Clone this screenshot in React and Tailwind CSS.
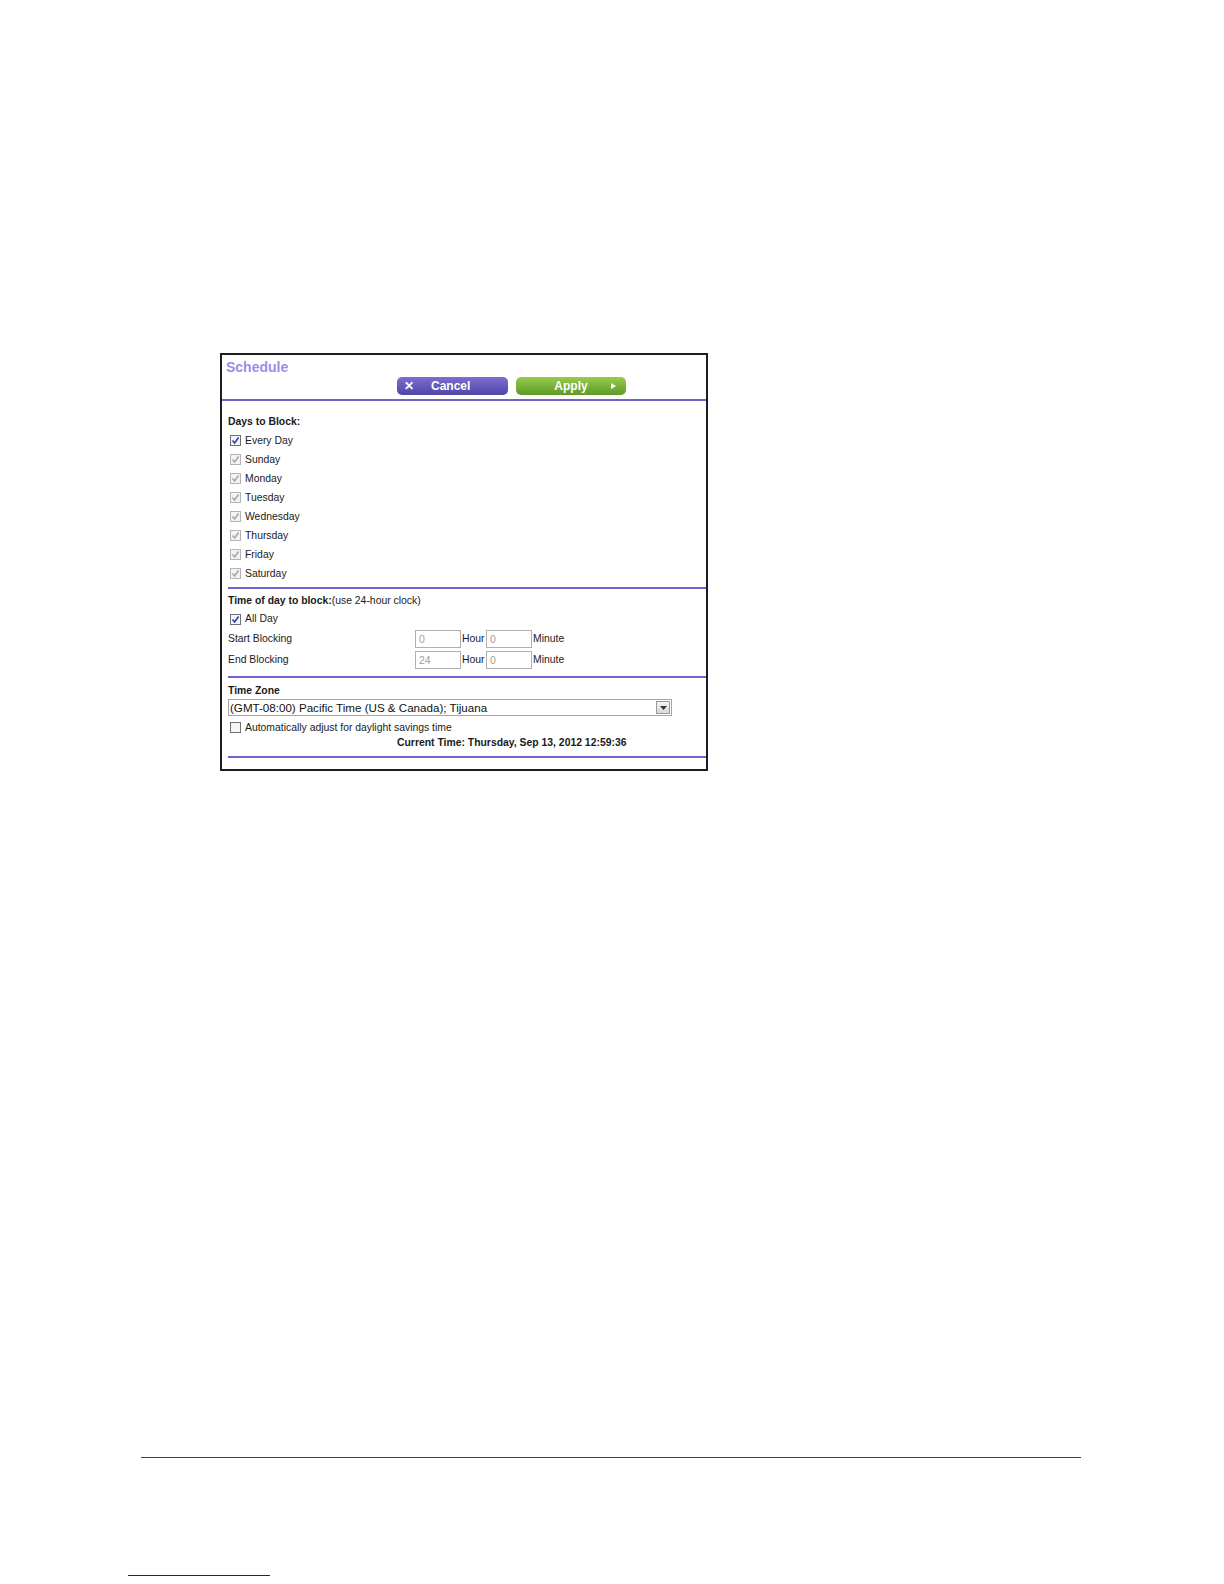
const FONT = { fontFamily: '"Liberation Sans", Arial, sans-serif' }

const DAYS = ['Sunday', 'Monday', 'Tuesday', 'Wednesday', 'Thursday', 'Friday', 'Saturday']

function Check({ checked, disabled }) {
  const box = disabled
    ? 'border-[#b4b4b4] bg-[#f3f3f3]'
    : 'border-[#707070] bg-[#f6f6f6]'
  return (
    <span className={`inline-flex w-[11px] h-[11px] border items-center justify-center shrink-0 ${box}`}>
      {checked && (
        <svg width="9" height="9" viewBox="0 0 9 9">
          <path
            d="M1.5 4.5 L3.6 7 L7.6 1.5"
            fill="none"
            stroke={disabled ? '#a8a8a8' : '#2b3cc4'}
            strokeWidth="1.6"
          />
        </svg>
      )}
    </span>
  )
}

function Row({ children, className = '' }) {
  return <div className={`flex items-center h-[19px] ${className}`}>{children}</div>
}

function Line() {
  return <div className="h-[2px] bg-[#6f63cc]" />
}

function TimeInput({ value }) {
  return (
    <input
      disabled
      value={value}
      className="w-[46px] h-[18px] border border-[#b0b0b0] bg-white text-[#a0a0a0] text-[10.5px] pl-[3px] outline-none"
      style={FONT}
    />
  )
}

export default function App() {
  return (
    <div className="w-[1224px] h-[1584px] bg-white pt-[353px] text-[#1a1a1a] text-[10.4px]" style={FONT}>
      {/* Schedule panel */}
      <div className="ml-[220px] w-[488px] border-2 border-[#1e1e1e] bg-white">
        <div className="pl-[4px] pt-[3px] h-[22px]">
          <span className="text-[14px] font-bold text-[#9a8ee6] leading-[18px]">Schedule</span>
        </div>

        <div className="flex pl-[175px] gap-[8px] h-[20px]">
          <button className="w-[111px] h-[18px] rounded-[5px] bg-gradient-to-b from-[#7b70cf] to-[#5045a8] text-white font-bold text-[12px] flex items-center">
            <span className="pl-[7px] w-[30px] text-left text-[12px]">✕</span>
            <span className="pl-[4px]">Cancel</span>
          </button>
          <button className="w-[110px] h-[18px] rounded-[5px] bg-gradient-to-b from-[#96cc4e] to-[#5f9a28] text-white font-bold text-[12px] flex items-center relative">
            <span className="flex-1 text-center">Apply</span>
            <svg className="absolute right-[10px] top-[6px]" width="5" height="6" viewBox="0 0 5 6">
              <path d="M0 0 L5 3 L0 6 Z" fill="#ffffff" />
            </svg>
          </button>
        </div>

        <div className="mt-[2px]">
          <Line />
        </div>

        <div className="pl-[6px] pt-[11px]">
          <Row>
            <span className="font-bold">Days to Block:</span>
          </Row>
          <Row className="gap-[4px] pl-[2px]">
            <Check checked />
            <span>Every Day</span>
          </Row>
          {DAYS.map(day => (
            <Row key={day} className="gap-[4px] pl-[2px]">
              <Check checked disabled />
              <span>{day}</span>
            </Row>
          ))}

          <div className="mt-[4px]">
            <Line />
          </div>

          <div className="flex items-center h-[18px] mt-[3px]">
            <span className="font-bold">Time of day to block:</span>
            <span>(use 24-hour clock)</span>
          </div>
          <div className="flex items-center h-[18px] gap-[4px] pl-[2px]">
            <Check checked />
            <span>All Day</span>
          </div>
          <div className="flex items-center h-[21px]">
            <span className="w-[187px]">Start Blocking</span>
            <TimeInput value="0" />
            <span className="pl-[1px] w-[25px]">Hour</span>
            <TimeInput value="0" />
            <span className="pl-[1px]">Minute</span>
          </div>
          <div className="flex items-center h-[21px]">
            <span className="w-[187px]">End Blocking</span>
            <TimeInput value="24" />
            <span className="pl-[1px] w-[25px]">Hour</span>
            <TimeInput value="0" />
            <span className="pl-[1px]">Minute</span>
          </div>

          <div className="mt-[6px]">
            <Line />
          </div>

          <div className="flex items-center h-[17px] mt-[4px]">
            <span className="font-bold">Time Zone</span>
          </div>
          <div className="w-[444px] h-[17px] border border-[#a5a5a5] flex items-center justify-between">
            <span className="pl-[1px] text-[11.6px] text-[#111]">(GMT-08:00) Pacific Time (US &amp; Canada); Tijuana</span>
            <span className="w-[14px] h-[13px] mr-[1px] border border-[#9a9a9a] bg-gradient-to-b from-[#f4f4f4] to-[#d8d8d8] flex items-center justify-center">
              <svg width="7" height="4" viewBox="0 0 7 4">
                <path d="M0 0 L7 0 L3.5 4 Z" fill="#333" />
              </svg>
            </span>
          </div>
          <Row className="gap-[4px] pl-[2px] mt-[2px]">
            <Check />
            <span>Automatically adjust for daylight savings time</span>
          </Row>
          <div className="flex items-center h-[12px] pl-[169px]">
            <span className="font-bold">Current Time: Thursday, Sep 13, 2012 12:59:36</span>
          </div>

          <div className="mt-[7px]">
            <Line />
          </div>
          <div className="h-[11px]" />
        </div>
      </div>

      {/* page footer rules */}
      <div className="ml-[141px] mt-[686px] w-[940px] h-px bg-[#5a2c6c]" />
      <div className="ml-[128px] mt-[117px] w-[142px] h-px bg-[#1c1c86]" />
    </div>
  )
}
